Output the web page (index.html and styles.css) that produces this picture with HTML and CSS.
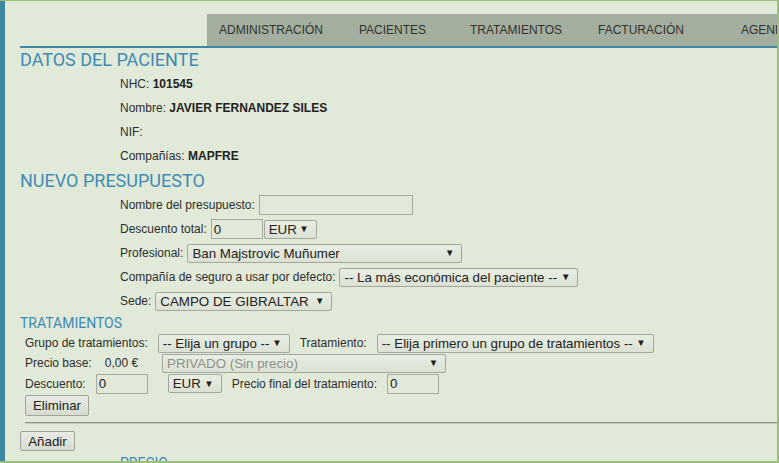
FILE: index.html
```html
<!DOCTYPE html>
<html lang="es">
<head>
<meta charset="utf-8">
<title>Nuevo presupuesto</title>
<link rel="stylesheet" href="styles.css">
</head>
<body>
<div class="frame">
  <div class="inner">
    <header class="header">
      <nav class="nav">
        <span class="nav-item n1">ADMINISTRACIÓN</span>
        <span class="nav-item n2">PACIENTES</span>
        <span class="nav-item n3">TRATAMIENTOS</span>
        <span class="nav-item n4">FACTURACIÓN</span>
        <span class="nav-item n5">AGENDA</span>
      </nav>
    </header>

    <h1 class="h-big">DATOS DEL PACIENTE</h1>
    <div class="info">
      <div class="info-row">NHC: <b>101545</b></div>
      <div class="info-row">Nombre: <b>JAVIER FERNANDEZ SILES</b></div>
      <div class="info-row">NIF:</div>
      <div class="info-row">Compañías: <b>MAPFRE</b></div>
    </div>

    <h1 class="h-big h-second">NUEVO PRESUPUESTO</h1>
    <div class="form">
      <div class="frow">
        <span class="lbl">Nombre del presupuesto:</span>
        <input class="txt w-name" type="text" value="">
      </div>
      <div class="frow">
        <span class="lbl">Descuento total:</span>
        <input class="txt w-small" type="text" value="0">
        <span class="sel tight w-eur"><span class="sel-text">EUR</span></span>
      </div>
      <div class="frow">
        <span class="lbl">Profesional:</span>
        <span class="sel w-prof"><span class="sel-text">Ban Majstrovic Muñumer</span></span>
      </div>
      <div class="frow">
        <span class="lbl">Compañía de seguro a usar por defecto:</span>
        <span class="sel w-comp"><span class="sel-text">-- La más económica del paciente --</span></span>
      </div>
      <div class="frow">
        <span class="lbl">Sede:</span>
        <span class="sel w-sede"><span class="sel-text">CAMPO DE GIBRALTAR</span></span>
      </div>
    </div>

    <h2 class="h-small">TRATAMIENTOS</h2>
    <div class="trat">
      <div class="trow r1">
        <span class="lbl">Grupo de tratamientos:</span>
        <span class="sel w-grupo"><span class="sel-text">-- Elija un grupo --</span></span>
        <span class="lbl">Tratamiento:</span>
        <span class="sel w-trat"><span class="sel-text">-- Elija primero un grupo de tratamientos --</span></span>
      </div>
      <div class="trow r2">
        <span class="lbl">Precio base:</span>
        <span class="lbl ml3">0,00 €</span>
        <span class="sel disabled w-priv ml14"><span class="sel-text">PRIVADO (Sin precio)</span></span>
      </div>
      <div class="trow r3">
        <span class="lbl">Descuento:</span>
        <input class="txt w-small" type="text" value="0">
        <span class="sel w-eur2 ml10"><span class="sel-text">EUR</span></span>
        <span class="lbl">Precio final del tratamiento:</span>
        <input class="txt w-small" type="text" value="0">
      </div>
      <div class="trow r4">
        <button class="btn w-elim" type="button">Eliminar</button>
      </div>
      <div class="rule"></div>
    </div>
    <button class="btn w-add" type="button">Añadir</button>
    <h2 class="h-small h-precio">PRECIO</h2>
  </div>
</div>
</body>
</html>
```
FILE: styles.css
```css
* { box-sizing: border-box; }
html, body { margin: 0; padding: 0; }
body {
  font-family: "Liberation Sans", Arial, sans-serif;
  font-size: 12px;
  color: #2e2e2e;
  background: #e1e9d8;
}
.frame {
  width: 779px;
  height: 463px;
  border-top: 1px solid #9cbf7c;
  border-right: 2px solid #9cbf7c;
  border-bottom: 2px solid #9cbf7c;
  overflow: hidden;
  background: #e1e9d8;
}
.inner {
  height: 100%;
  border-left: 5px solid #3f88a3;
  padding-left: 15px;
  overflow: hidden;
}
.header {
  margin-top: 13px;
  border-bottom: 2px solid #3f88a3;
}
.nav {
  margin-left: 187px;
  height: 32px;
  background: #a4ae9f;
  display: flex;
  white-space: nowrap;
  overflow: hidden;
}
.nav-item {
  line-height: 32px;
  padding-left: 12px;
  font-size: 12px;
  color: #2f332d;
  flex: none;
}
.n1 { width: 140px; }
.n2 { width: 111px; }
.n3 { width: 128px; }
.n4 { width: 143px; }
.n5 { width: 120px; }

.h-big {
  margin: 0;
  font-family: Roboto, "Liberation Sans", sans-serif;
  font-weight: 400;
  font-size: 18px;
  line-height: 24px;
  color: #3f8bb5;
}
.h-second { margin-top: 1px; }
.h-small {
  margin: 0;
  font-family: Roboto, "Liberation Sans", sans-serif;
  font-weight: 400;
  font-size: 14px;
  line-height: 20px;
  color: #3f8bb5;
}
.info { margin-left: 100px; }
.info-row { line-height: 24px; height: 24px; }
.info-row b { color: #222; }

.form { margin-left: 100px; }
.frow {
  height: 24px;
  display: flex;
  align-items: center;
  gap: 4px;
  white-space: nowrap;
}
.lbl { white-space: nowrap; }

.txt {
  height: 20px;
  border: 1px solid #a5aa9f;
  background: transparent;
  font-family: "Liberation Sans", Arial, sans-serif;
  font-size: 13.33px;
  color: #222;
  padding: 0 2px;
  margin: 0;
  outline: none;
}
.w-name { width: 154px; }
.w-small { width: 52px; }

.sel {
  position: relative;
  display: inline-flex;
  align-items: center;
  height: 19px;
  border: 1px solid #a3a79d;
  border-radius: 2px;
  background: linear-gradient(#e9eee3, #dbe1d3);
  font-size: 13.33px;
  color: #222;
  padding-left: 4px;
  flex: none;
}
.sel::after {
  content: "▼";
  position: absolute;
  right: 7px;
  top: 50%;
  transform: translateY(-55%);
  font-size: 9.5px;
  color: #1e1e1e;
}
.sel-text { white-space: nowrap; line-height: 17px; }
.sel.disabled { color: #8d9189; }
.sel.disabled::after { color: #1e1e1e; }
.sel.tight { margin-left: -3px; }
.w-eur { width: 53px; }
.w-prof { width: 275px; }
.w-comp { width: 239px; }
.w-sede { width: 177px; }
.w-grupo { width: 132px; }
.w-trat { width: 277px; }
.w-priv { width: 284px; }
.w-eur2 { width: 54px; }

.trat { padding-left: 5px; }
.trow {
  display: flex;
  align-items: center;
  gap: 10px;
  white-space: nowrap;
}
.r1 { height: 20px; margin-top: 0; }
.r2 { height: 20px; }
.r3 { height: 21px; }
.r4 { height: 22px; }
.ml3 { margin-left: 3px; }
.ml10 { margin-left: 10px; }
.ml14 { margin-left: 14px; }

.btn {
  font-family: "Liberation Sans", Arial, sans-serif;
  font-size: 13.33px;
  color: #222;
  border: 1px solid #a0a49a;
  border-radius: 2px;
  background: linear-gradient(#e8ece4, #d6dbd0);
  padding: 0;
  margin: 0;
}
.w-elim { width: 64px; height: 21px; }
.w-add { width: 55px; height: 20px; display: block; margin-top: 7px; }
.rule {
  margin-top: 6px;
  height: 2px;
  border-top: 1px solid #8f9489;
  border-bottom: 1px solid #c7cebf;
}
.h-precio { margin-left: 100px; margin-top: 2px; }
```
